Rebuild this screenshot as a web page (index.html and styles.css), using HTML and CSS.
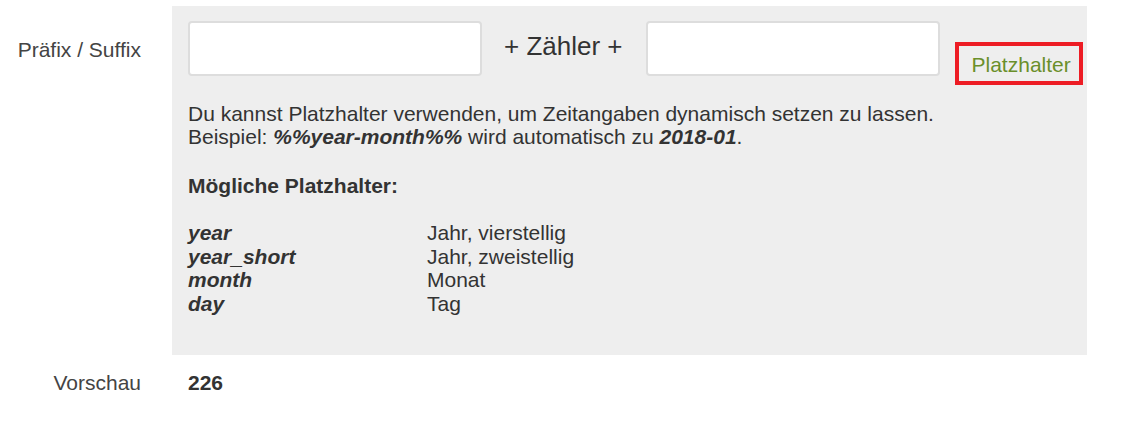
FILE: index.html
```html
<!DOCTYPE html>
<html lang="de">
<head>
<meta charset="utf-8">
<title>Präfix / Suffix</title>
<link rel="stylesheet" href="styles.css">
</head>
<body>
<div class="form">
  <div class="row row-main">
    <div class="label label-main">Präfix / Suffix</div>
    <div class="panel">
      <div class="inputs">
        <input class="field" type="text">
        <span class="counter">+ Zähler +</span>
        <input class="field" type="text">
        <a class="ph-btn" href="#">Platzhalter</a>
      </div>
      <p class="help">Du kannst Platzhalter verwenden, um Zeitangaben dynamisch setzen zu lassen.<br>Beispiel: <b><i>%%year-month%%</i></b> wird automatisch zu <b><i>2018-01</i></b>.</p>
      <p class="help-title">Mögliche Platzhalter:</p>
      <div class="ph-table">
        <span class="key">year</span><span class="desc">Jahr, vierstellig</span>
        <span class="key">year_short</span><span class="desc">Jahr, zweistellig</span>
        <span class="key">month</span><span class="desc">Monat</span>
        <span class="key">day</span><span class="desc">Tag</span>
      </div>
    </div>
  </div>
  <div class="row row-preview">
    <div class="label">Vorschau</div>
    <div class="value">226</div>
  </div>
</div>
</body>
</html>
```

FILE: styles.css
```css
html, body {
  margin: 0;
  padding: 0;
  background: #ffffff;
}
body {
  font-family: "Liberation Sans", Arial, sans-serif;
  font-size: 21px;
  color: #333333;
}
.form {
  padding-top: 6px;
}
.row {
  display: grid;
  grid-template-columns: 172px 915px;
}
.label {
  text-align: right;
  padding-right: 31px;
  color: #444444;
  line-height: 23px;
}
.label-main {
  padding-top: 32px;
}
.panel {
  background: #eeeeee;
  padding: 15px 16px 39px 16px;
}
.inputs {
  display: flex;
  align-items: flex-start;
  height: 55px;
}
.field {
  box-sizing: border-box;
  flex: 0 0 294px;
  width: 294px;
  height: 55px;
  margin: 0;
  border: 2px solid #dddddd;
  border-radius: 4px;
  background: #ffffff;
  font: inherit;
  padding: 6px 10px;
}
.counter {
  flex: 0 0 auto;
  white-space: nowrap;
  font-size: 26px;
  line-height: 30px;
  margin: 10px 23px 0 22px;
  color: #333333;
}
.ph-btn {
  flex: 0 0 auto;
  display: block;
  box-sizing: border-box;
  margin: 21px 0 0 15px;
  height: 43px;
  width: 128px;
  border: 4px solid #ed1c24;
  padding: 6px 0 0 13px;
  color: #6a8f2a;
  text-decoration: none;
  font-size: 21px;
  line-height: 25px;
  white-space: nowrap;
}
.help {
  margin: 26px 0 0 0;
  line-height: 23px;
}
.help-title {
  margin: 26px 0 0 0;
  line-height: 23px;
  font-weight: bold;
}
.ph-table {
  margin-top: 24px;
  display: grid;
  grid-template-columns: 239px auto;
  line-height: 23.7px;
}
.key {
  font-weight: bold;
  font-style: italic;
}
.row-preview {
  margin-top: 16px;
}
.value {
  padding-left: 16px;
  font-weight: bold;
  line-height: 23px;
}
```
